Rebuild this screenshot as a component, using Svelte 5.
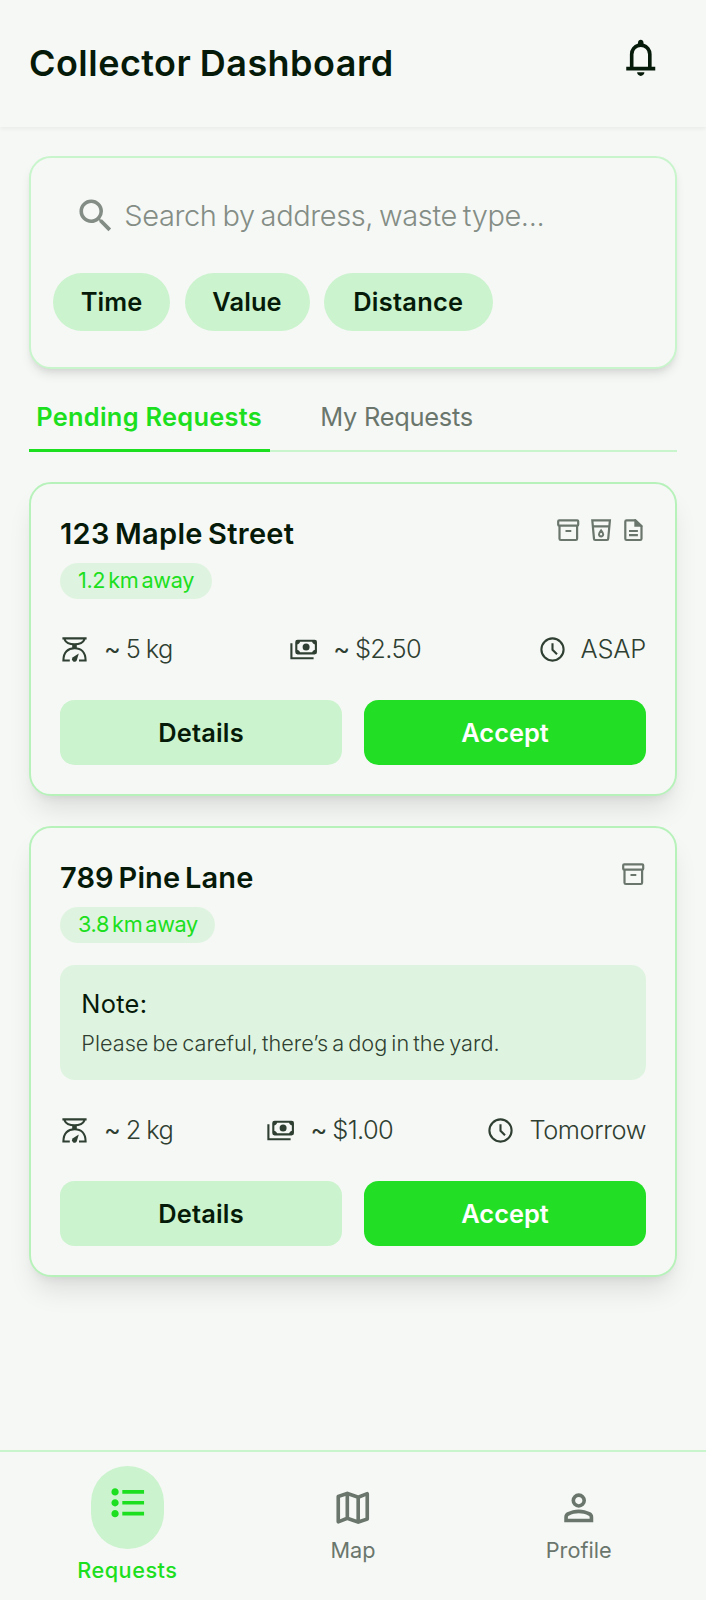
<script>
  const filters = [
    { label: 'Time', cls: 'time' },
    { label: 'Value', cls: 'value' },
    { label: 'Distance', cls: 'distance' }
  ];
  const requests = [
    {
      address: '123 Maple Street', distance: '1.2 km away', types: ['box', 'cup', 'doc'],
      weight: '5 kg', price: '$2.50', when: 'ASAP', cls: 'first'
    },
    {
      address: '789 Pine Lane', distance: '3.8 km away', types: ['box'],
      note: 'Please be careful, there’s a dog in the yard.',
      weight: '2 kg', price: '$1.00', when: 'Tomorrow', cls: 'second'
    }
  ];
</script>

<div class="page">
  <header>
    <h1>Collector Dashboard</h1>
    <svg class="bell" viewBox="0 -960 960 960"><path d="M160-200v-80h80v-280q0-83 50-147.500T420-792v-28q0-25 17.500-42.500T480-880t42.500 17.500T540-820v28q80 20 130 84.500T720-560v280h80v80H160ZM480-80q-33 0-56.500-23.500T400-160h160q0 33-23.500 56.500T480-80ZM320-280h320v-280q0-66-47-113t-113-47q-66 0-113 47t-47 113v280Z" /></svg>
  </header>

  <main>
    <section class="search-card">
      <div class="search">
        <svg class="lg" viewBox="0 0 24 24"><path d="M15.500 14h-.790l-.280-.270A6.471 6.471 0 0 0 16 9.500 6.500 6.500 0 1 0 9.500 16c1.610 0 3.090-.590 4.230-1.570l.270.280v.790l5 4.990L20.490 19l-4.990-5zm-6 0C7.010 14 5 11.990 5 9.500S7.010 5 9.500 5 14 7.010 14 9.500 11.990 14 9.500 14z" /></svg>
        <span>Search by address, waste type...</span>
      </div>
      <div class="chips">
        {#each filters as f}
          <button class="chip {f.cls}">{f.label}</button>
        {/each}
      </div>
    </section>

    <nav class="tabs">
      <span class="tab active">Pending Requests</span>
      <span class="tab">My Requests</span>
    </nav>

    {#each requests as r}
      <article class="card {r.cls}">
        <div class="top">
          <h2>{r.address}</h2>
          <div class="types">
            {#each r.types as t}
              <svg viewBox="0 0 26 26" fill="none" stroke="currentColor" stroke-width="2.200">
                {#if t === 'box'}
                  <rect x="3.200" y="3.300" width="20" height="5.400" rx="1" />
                  <path d="M4.500 8.700V21.700a1.300 1.300 0 0 0 1.300 1.300H20.800a1.300 1.300 0 0 0 1.300-1.300V8.700M10.500 14h5.800" />
                {:else if t === 'cup'}
                  <path d="M4.300 3.300H21.900L20.200 21.800a1.200 1.200 0 0 1-1.200 1.200H7.200a1.200 1.200 0 0 1-1.200-1.200ZM5 9.400H21.200" />
                  <path stroke-width="2" d="M13.100 13.300c-1.300 1.600-2.100 2.800-2.100 4a2.100 2.100 0 0 0 4.200 0c0-1.200-.8-2.400-2.100-4Z" />
                {:else}
                  <path d="M15.200 3.300H6.600A1.300 1.300 0 0 0 5.300 4.600V21.700A1.300 1.300 0 0 0 6.600 23H20.200a1.300 1.300 0 0 0 1.300-1.300V9.200Z M9 14h8.900M9 18.200h8.900" />
                  <path fill="currentColor" stroke="none" d="M14.300 2.300h1.500L22.500 8.700V9.700H14.300Z" />
                {/if}
              </svg>
            {/each}
          </div>
        </div>
        <span class="badge">{r.distance}</span>

        {#if r.note}
          <div class="note">
            <p class="note-title">Note:</p>
            <p class="note-body">{r.note}</p>
          </div>
        {/if}

        <div class="stats">
          <div class="stat weight">
            <svg viewBox="0 0 29 29" fill="none" stroke="currentColor" stroke-width="2.100">
              <path d="M2.400 3.400H26.600M4.500 4.300c1.500 3.500 5 5 10 5s8.500-1.500 10-5" />
              <path fill="currentColor" stroke="none" d="M12.200 9H16.800V13.500H12.200Z" />
              <path d="M9.800 25.500H3.400C3.400 17 8 13.200 14.500 13.200S25.600 17 25.600 25.500H19" />
              <path fill="currentColor" stroke="none" d="M18.800 18.400 16.800 25.200A2.500 2.500 0 1 1 12.900 22.300Z" />
            </svg>
            <span><b>~</b> {r.weight}</span>
          </div>
          <div class="stat price">
            <svg viewBox="0 0 29 29" fill="none" stroke="currentColor" stroke-width="2.100">
              <rect x="7.300" y="5.800" width="19.600" height="12.600" rx="1.300" />
              <circle cx="17.100" cy="12.100" r="3.500" fill="currentColor" stroke="none" />
              <path fill="currentColor" stroke="none" d="M7 5.500h4.200a3.700 3.700 0 0 1-4.200 4ZM27.200 5.500H23a3.700 3.700 0 0 0 4.200 4ZM7 18.700h4.200a3.700 3.700 0 0 0-4.200-4ZM27.200 18.700H23a3.700 3.700 0 0 1 4.200-4Z" />
              <path d="M2.400 8.200V23.200H24.600" />
            </svg>
            <span><b>~</b> {r.price}</span>
          </div>
          <div class="stat when">
            <svg viewBox="0 0 29 29" fill="none" stroke="currentColor" stroke-width="2.100">
              <circle cx="14.500" cy="14.500" r="11.100" />
              <path d="M14.500 8.300V14.800L19 19.200" />
            </svg>
            <span>{r.when}</span>
          </div>
        </div>

        <div class="actions">
          <button class="details">Details</button>
          <button class="accept">Accept</button>
        </div>
      </article>
    {/each}
  </main>

  <footer>
    <div class="item active">
      <div class="pill">
        <svg class="lg" viewBox="0 -960 960 960"><path d="M360-200v-80h480v80H360Zm0-240v-80h480v80H360Zm0-240v-80h480v80H360ZM200-160q-33 0-56.500-23.500T120-240q0-33 23.500-56.500T200-320q33 0 56.500 23.500T280-240q0 33-23.500 56.500T200-160Zm0-240q-33 0-56.500-23.500T120-480q0-33 23.500-56.500T200-560q33 0 56.500 23.500T280-480q0 33-23.500 56.500T200-400Zm0-240q-33 0-56.500-23.500T120-720q0-33 23.500-56.500T200-800q33 0 56.500 23.500T280-720q0 33-23.500 56.500T200-640Z" /></svg>
      </div>
      <span>Requests</span>
    </div>
    <div class="item">
      <svg class="lg" viewBox="0 -960 960 960"><path d="m600-120-240-84-186 72q-20 8-37-4.500T120-170v-560q0-13 7.500-23t20.500-15l212-72 240 84 186-72q20-8 37 4.500t17 33.500v560q0 13-7.500 23T812-192l-212 72Zm-40-98v-468l-160-56v468l160 56Zm80 0 120-40v-474l-120 46v468Zm-440-10 120-46v-468l-120 40v474Z" /></svg>
      <span>Map</span>
    </div>
    <div class="item">
      <svg class="lg" viewBox="0 -960 960 960"><path d="M480-480q-66 0-113-47t-47-113q0-66 47-113t113-47q66 0 113 47t47 113q0 66-47 113t-113 47ZM160-160v-112q0-34 17.500-62.500T224-378q62-31 126-46.500T480-440q66 0 130 15.500T736-378q29 15 46.500 43.500T800-272v112H160Zm80-80h480v-32q0-11-5.500-20T700-306q-54-27-109-40.500T480-360q-56 0-111 13.500T260-306q-9 5-14.500 14t-5.500 20v32Zm240-320q33 0 56.500-23.500T560-640q0-33-23.500-56.500T480-720q-33 0-56.500 23.500T400-640q0 33 23.500 56.500T480-560Z" /></svg>
      <span>Profile</span>
    </div>
  </footer>
</div>

<style>
  :global(body) { margin: 0; background: #f6f8f6; }
  * { box-sizing: border-box; }
  .page {
    width: 706px; height: 1600px; display: flex; flex-direction: column;
    background: #f6f8f6; color: #061a09; overflow: hidden;
    font-family: Inter, "Noto Sans", sans-serif; white-space: nowrap;
  }
  svg { display: block; flex: none; }
  .lg, .bell { width: 43.5px; height: 43.5px; fill: currentColor; }
  h1, h2, p { margin: 0; }
  button { font: inherit; border: 0; padding: 0; color: inherit; white-space: nowrap; }

  header {
    height: 127px; flex: none; padding: 0 44px 0 29px;
    display: flex; align-items: center; justify-content: space-between;
    box-shadow: 0 2px 4px rgba(0, 0, 0, .05);
  }
  h1 { font-size: 36px; line-height: 45px; font-weight: 600; letter-spacing: .46px; word-spacing: -1px; }
  .bell { margin-bottom: 11px; }

  main { flex: 1; padding: 29px 29px 0; }
  .search-card {
    height: 213px; padding: 22px; border: 2px solid #c8f5cb; border-radius: 22px;
    background: #f6f8f6;
    box-shadow: 0 7px 11px -2px rgba(0, 0, 0, .1), 0 4px 7px -4px rgba(0, 0, 0, .1);
  }
  .search { height: 71px; padding-left: 20.800px; display: flex; align-items: center; gap: 7px; color: #848d85; }
  .search span { font-size: 29px; line-height: 40px; font-weight: 300; letter-spacing: -.4px; word-spacing: -1.800px; }
  .chips { margin-top: 22px; display: flex; gap: 14.500px; }
  .chip {
    height: 58px; border-radius: 29px; background: #cbf3cd;
    font-size: 25.400px; line-height: 36px; font-weight: 600; letter-spacing: .1px;
  }
  .chip.time { width: 117px; }
  .chip.value { width: 125px; }
  .chip.distance { width: 168.500px; letter-spacing: .25px; }

  .tabs { margin-top: 26px; height: 57.400px; display: flex; gap: 43.500px; border-bottom: 2px solid #c8f5cb; }
  .tab { height: 57.400px; padding: 0 7.200px; font-size: 25.400px; line-height: 43px; font-weight: 400; letter-spacing: -.25px; color: #6a766c; }
  .tab.active { width: 240.500px; border-bottom: 3.500px solid #1cdf20; color: #1cdf20; font-weight: 600; letter-spacing: .28px; }

  .card {
    margin-top: 29.400px; padding: 29px; border: 2px solid #b8f2bb; border-radius: 22px; background: #f6f8f6;
    box-shadow: 0 18px 27px -5px rgba(0, 0, 0, .1), 0 7px 11px -7px rgba(0, 0, 0, .1);
  }
  .top { display: flex; justify-content: space-between; }
  h2 { font-size: 29px; line-height: 41px; font-weight: 600; letter-spacing: .3px; word-spacing: -2.300px; }
  .second h2 { letter-spacing: .1px; word-spacing: -2.500px; }
  .types { display: flex; gap: 6.500px; padding-top: 4px; color: #6a766c; }
  .types svg { width: 26px; height: 26px; }
  .badge {
    display: block; width: 152px; height: 36px; margin-top: 9px; padding-left: 18px; border-radius: 18px;
    background: #dff4e0; color: #1cdf20; font-size: 21.700px; line-height: 35px; font-weight: 400;
    letter-spacing: -.35px; word-spacing: -2.700px;
  }
  .second .badge { width: 155px; }
  .note { margin-top: 22px; height: 115px; padding: 22px 21.300px; border-radius: 14.500px; background: #dff4e0; }
  .note-title { font-size: 25.400px; line-height: 34px; font-weight: 400; letter-spacing: .3px; }
  .note-body { margin-top: 6px; font-size: 21.700px; line-height: 33px; font-weight: 300; word-spacing: -2px; color: #2f3f31; }
  .stats { margin-top: 32.600px; height: 36px; display: flex; justify-content: space-between; color: #2f3f31; }
  .stat { display: flex; align-items: center; gap: 15px; font-size: 25.400px; line-height: 36px; font-weight: 300; letter-spacing: -.6px; word-spacing: -1px; }
  .stat svg { width: 29px; height: 29px; }
  .stat b { font-weight: 400; }
  .stat.when { gap: 14px; letter-spacing: -.4px; }
  .first .when { letter-spacing: -.2px; }
  .actions { margin-top: 32.600px; display: grid; grid-template-columns: 1fr 1fr; gap: 22px; }
  .actions button { height: 65.300px; border-radius: 14.500px; font-size: 25.400px; font-weight: 600; }
  .details { background: #cbf3cd; letter-spacing: .2px; }
  .accept { background: #22df26; color: #fff; }

  footer {
    height: 150px; flex: none; padding: 0 14.500px 1px; border-top: 2px solid #c8f5cb;
    display: grid; grid-template-columns: repeat(3, 1fr); align-items: center; color: #6a766c;
  }
  .item { display: flex; flex-direction: column; align-items: center; gap: 7px; font-size: 21.700px; line-height: 29px; }
  .item.active { color: #1cdf20; font-weight: 500; letter-spacing: .5px; }
  .pill { width: 72.500px; height: 83px; padding-top: 14.500px; border-radius: 36.250px; background: #cbf3cd; display: flex; justify-content: center; }
</style>
